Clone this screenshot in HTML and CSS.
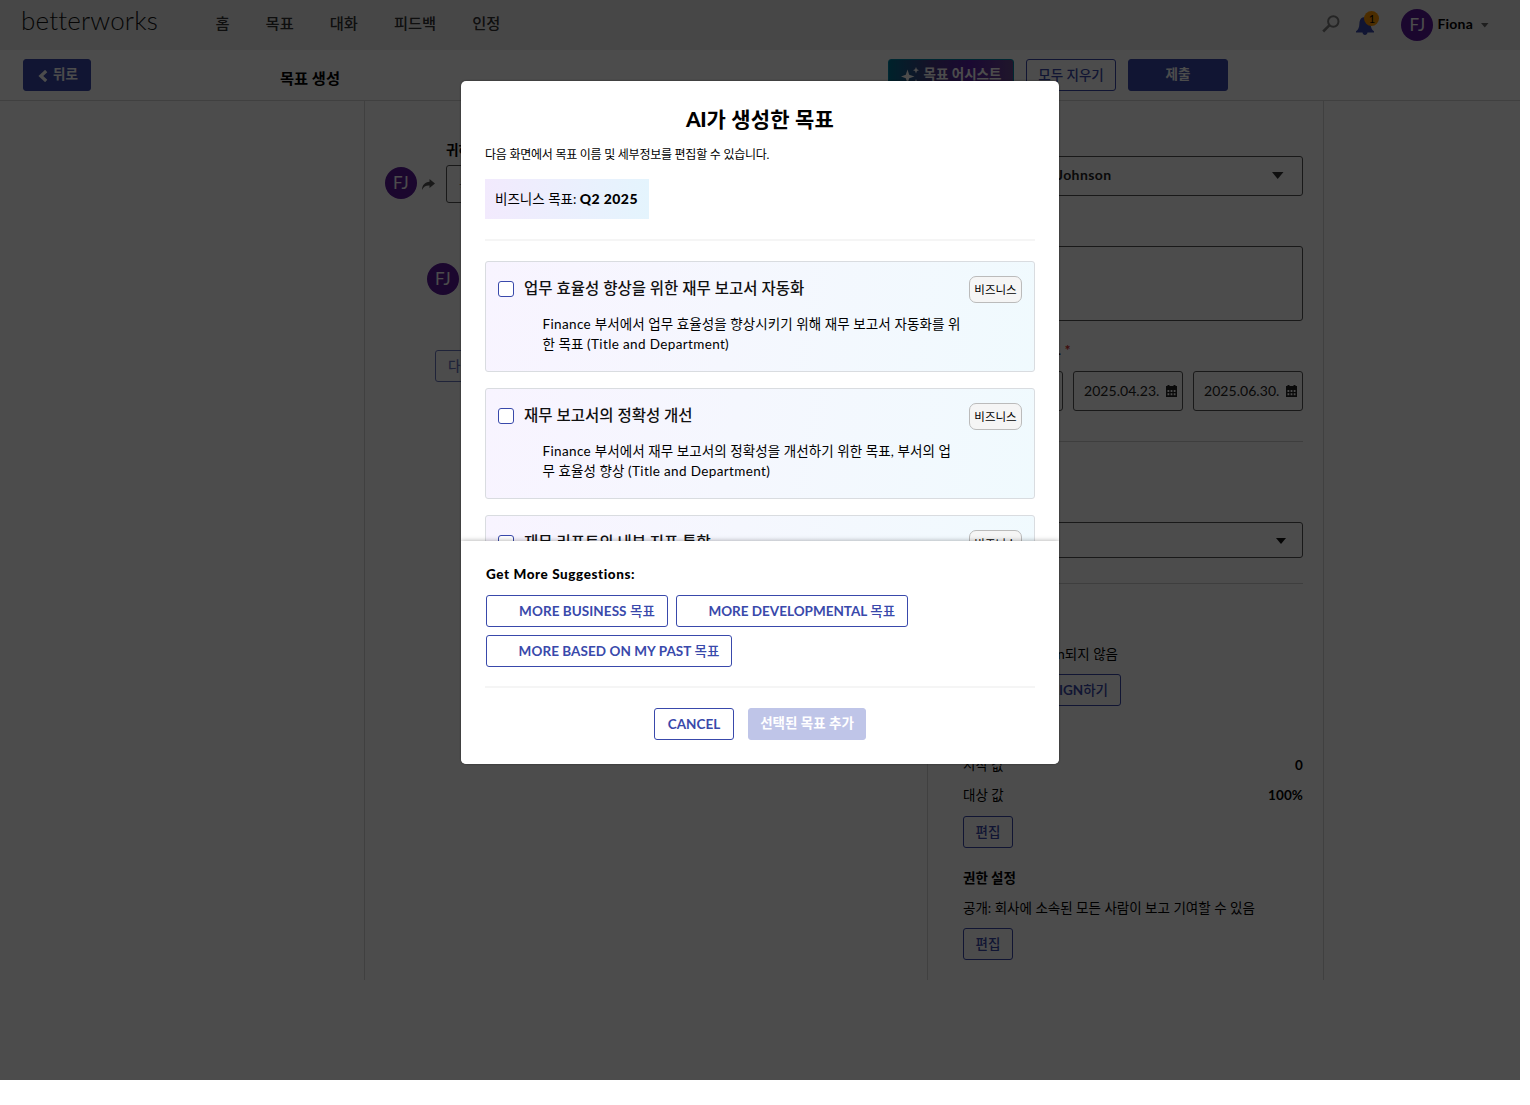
FILE: index.html
```html
<!DOCTYPE html>
<html lang="ko">
<head>
<meta charset="utf-8">
<title>목표 생성</title>
<link rel="stylesheet" href="styles.css">
</head>
<body>
<div class="app">
  <header class="topbar">
    <div class="logo">betterworks</div>
    <nav class="nav"><a>홈</a><a>목표</a><a>대화</a><a>피드백</a><a>인정</a></nav>
    <div class="tools">
      <svg class="search" width="18" height="18" viewBox="0 0 18 18"><circle cx="11.3" cy="6.5" r="5.2" fill="none" stroke="#7d7d7d" stroke-width="2"/><path d="M7.3 10.4 1.2 16.5" stroke="#7d7d7d" stroke-width="2.6"/></svg>
      <div class="bell">
        <svg width="20" height="20" viewBox="0 0 20 20"><path fill="#3949ab" d="M10 1C6.3 1 4.6 3.8 4.4 7.5 4.2 11.4 3.4 13.700 1 15.200V16.600H7.500C7.700 18.300 8.600 19 10 19S12.300 18.300 12.500 16.600H19V15.200C16.600 13.700 15.800 11.400 15.600 7.500 15.400 3.800 13.700 1 10 1Z"/></svg>
        <span class="badge">1</span>
      </div>
      <span class="avatar">FJ</span>
      <span class="user">Fiona</span>
      <svg width="8" height="5" viewBox="0 0 8 5"><path d="M0 0H7.500L3.800 4.500Z" fill="#666"/></svg>
    </div>
  </header>

  <div class="subbar">
    <button class="btn solid back"><svg width="10" height="12" viewBox="0 0 10 12"><path d="M8.200 1 2.800 6 8.200 11" fill="none" stroke="#fff" stroke-width="3.200"/></svg>뒤로</button>
    <h1>목표 생성</h1>
    <div class="actions">
      <button class="btn assist"><svg width="18" height="18" viewBox="0 0 18 18"><path fill="#fff" d="M6.500 2.500 8.200 7.800 13.500 9.500 8.200 11.200 6.500 16.500 4.800 11.200 0 9.500 4.800 7.800ZM15 0 15.900 2.300 18 3.200 15.900 4.100 15 6.400 14.100 4.100 12 3.200 14.100 2.300ZM15 12 15.900 14.200 18 15 15.900 15.900 15 18 14.100 15.900 12 15 14.100 14.200Z"/></svg>목표 어시스트</button>
      <button class="btn line clear">모두 지우기</button>
      <button class="btn solid submit">제출</button>
    </div>
  </div>

  <main class="content">
    <section class="left">
      <div class="label">귀하</div>
      <div class="goal-row">
        <span class="avatar">FJ</span>
        <svg width="13" height="11" viewBox="0 0 13 11"><path fill="#555" d="M7.500 0 13 4.500 7.500 9V6.500C4 6.300 1.500 7.500 0 11 0 6 3 3 7.500 2.700Z"/></svg>
        <div class="field goal">목표</div>
      </div>
      <div class="sub-row"><span class="avatar">FJ</span></div>
      <button class="btn line next">다음</button>
    </section>
    <aside class="right">
      <div class="field owner"><b>Johnson</b><svg width="12" height="8" viewBox="0 0 12 8"><path d="M0 0H11.500L5.700 7Z" fill="#333"/></svg></div>
      <div class="field memo"></div>
      <div class="period">. <i>*</i></div>
      <div class="dates">
        <div class="field date"></div>
        <div class="field date">2025.04.23.<svg width="11" height="12" viewBox="0 0 11 12"><path fill="#222" fill-rule="evenodd" d="M0 1H1.500V0H3.500V1H7.500V0H9.500V1H11V12H0ZM1.500 5H3.300V7H1.500ZM4.600 5H6.400V7H4.600ZM7.700 5H9.500V7H7.700ZM1.500 8.300H3.300V10.300H1.500ZM4.600 8.300H6.400V10.300H4.600ZM7.700 8.300H9.500V10.300H7.700Z"/></svg></div>
        <div class="field date">2025.06.30.<svg width="11" height="12" viewBox="0 0 11 12"><path fill="#222" fill-rule="evenodd" d="M0 1H1.500V0H3.500V1H7.500V0H9.500V1H11V12H0ZM1.500 5H3.300V7H1.500ZM4.600 5H6.400V7H4.600ZM7.700 5H9.500V7H7.700ZM1.500 8.300H3.300V10.300H1.500ZM4.600 8.300H6.400V10.300H4.600ZM7.700 8.300H9.500V10.300H7.700Z"/></svg></div>
      </div>
      <hr class="rule rule-a">
      <div class="field category"><svg width="10" height="6" viewBox="0 0 10 6"><path d="M0 0H10L5 6Z" fill="#111"/></svg></div>
      <hr class="rule rule-b">
      <p class="align-text">Align되지 않음</p>
      <button class="btn line align-btn">ALIGN<span>하기</span></button>
      <div class="value start"><span>시작 값</span><b>0</b></div>
      <div class="value"><span>대상 값</span><b>100%</b></div>
      <button class="btn line edit">편집</button>
      <h2>권한 설정</h2>
      <p class="visibility">공개: 회사에 소속된 모든 사람이 보고 기여할 수 있음</p>
      <button class="btn line edit">편집</button>
    </aside>
  </main>

  <div class="overlay">
    <div class="modal" role="dialog">
      <div class="modal-body">
        <h2 class="modal-title"><b>AI</b>가 생성한 목표</h2>
        <p class="modal-sub">다음 화면에서 목표 이름 및 세부정보를 편집할 수 있습니다.</p>
        <div class="tag">비즈니스 목표: <b>Q2 2025</b></div>
        <hr class="divider">
        <div class="cards">
          <article class="card">
            <span class="check"></span>
            <div class="card-main"><h3>업무 효율성 향상을 위한 재무 보고서 자동화</h3>
            <p><span class="en">Finance</span> 부서에서 업무 효율성을 향상시키기 위해 재무 보고서 자동화를 위<br>한 목표 <span class="en">(Title and Department)</span></p></div>
            <span class="chip">비즈니스</span>
          </article>
          <article class="card">
            <span class="check"></span>
            <div class="card-main"><h3>재무 보고서의 정확성 개선</h3>
            <p><span class="en">Finance</span> 부서에서 재무 보고서의 정확성을 개선하기 위한 목표, 부서의 업<br>무 효율성 향상 <span class="en">(Title and Department)</span></p></div>
            <span class="chip">비즈니스</span>
          </article>
          <article class="card">
            <span class="check"></span>
            <div class="card-main"><h3>재무 리포트의 내부 지표 통합</h3></div>
            <span class="chip">비즈니스</span>
          </article>
        </div>
      </div>
      <footer class="modal-foot">
        <h4>Get More Suggestions:</h4>
        <div class="more">
          <button class="btn line m1">MORE BUSINESS&nbsp;<span>목표</span></button>
          <button class="btn line m2">MORE DEVELOPMENTAL&nbsp;<span>목표</span></button>
          <button class="btn line m3">MORE BASED ON MY PAST&nbsp;<span>목표</span></button>
        </div>
        <hr class="divider">
        <div class="confirm">
          <button class="btn line cancel">CANCEL</button>
          <button class="btn add">선택된 목표 추가</button>
        </div>
      </footer>
    </div>
  </div>
</div>
</body>
</html>
```
FILE: styles.css
```css
* { box-sizing: border-box; }
body { margin: 0; background: #fff; color: #000; font: 14px/20px Lato, "Noto Sans CJK KR", sans-serif; }
h1, h2, h3, h4, p, hr { margin: 0; }
hr { border: 0; }
svg { display: block; flex: none; }
.app { position: relative; width: 1520px; height: 1080px; overflow: hidden; background: #fff; }

/* Shared controls */
.btn { display: flex; align-items: center; justify-content: center; height: 32px; padding: 0 0 2px; border: 1px solid #3949ab; border-radius: 3px; font: 600 13.5px/20px Lato, "Noto Sans CJK KR", sans-serif; white-space: nowrap; background: transparent; color: #3949ab; }
.line { padding-bottom: 0; font-weight: 700; }
.line span, .clear, .edit, .next { font-weight: 500; }
.solid { background: #3949ab; color: #fff; }
.avatar { display: flex; align-items: center; justify-content: center; flex: none; width: 32px; height: 32px; border-radius: 50%; background: #5a189a; color: #fff; font-size: 17px; letter-spacing: .4px; }
.field { border: 1px solid #555; border-radius: 3px; background: #fff; }

/* Top bar */
.topbar { display: flex; align-items: center; height: 50px; background: #efefef; }
.logo { width: 194px; padding: 0 0 10px 21px; font-weight: 300; font-size: 26px; letter-spacing: .15px; color: #111; }
.nav { display: flex; gap: 36px; padding: 0 0 4px 21.500px; font-size: 15.300px; font-weight: 500; color: #333; }
.tools { display: flex; align-items: center; margin-left: auto; padding-right: 31px; }
.search { margin: -3px 15px 0 0; }
.bell { position: relative; width: 20px; height: 20px; margin: 2px 26px 0 0; }
.badge { position: absolute; left: 9px; top: -5px; width: 15px; height: 15px; border-radius: 50%; background: #ff9800; color: #000; font-size: 11px; line-height: 15px; text-align: center; }
.user { margin: -2px 8px 0 4px; font-weight: 700; letter-spacing: .2px; }

/* Page bar */
.subbar { display: flex; align-items: flex-start; height: 51px; padding: 9px 292px 0 23px; border-bottom: 1px solid #d8d8d8; }
.subbar h1 { margin: 9px 0 0 189px; font-size: 15.300px; line-height: 20px; font-weight: 700; }
.back { width: 68px; gap: 5px; padding-left: 2px; }
.back svg { margin-top: 4px; }
.actions { display: flex; gap: 12px; margin-left: auto; }
.assist { width: 126px; gap: 5px; border-color: #0288a8; background: linear-gradient(90deg, #00708f, #4a3a85 35%, #5a1fa8 65%, #6b4a90); color: #fff; }
.assist svg { margin-top: 3px; }
.clear { width: 90px; }
.submit { width: 100px; }

/* Goal form */
.content { display: flex; width: 960px; height: 879px; margin-left: 364px; border: solid #d8d8d8; border-width: 0 1px; }
.left { width: 563px; padding: 39px 0 0 20px; border-right: 1px solid #d8d8d8; }
.label { padding-left: 61px; font-size: 13.500px; font-weight: 700; }
.goal-row { display: flex; align-items: center; gap: 5px; margin-top: 5px; }
.goal-row .avatar { margin-top: -2px; }
.goal { flex: 1; height: 38px; margin: 0 20px 0 6px; padding: 8px 12px; color: #777; }
.sub-row { margin: 60px 0 0 42px; }
.next { width: 68px; margin: 55px 0 0 50px; padding-left: 12px; justify-content: flex-start; opacity: .75; }
.right { flex: 1; padding: 55px 20px 0 35px; font-size: 13.500px; }
.owner { display: flex; align-items: center; justify-content: space-between; height: 40px; padding: 0 18px 0 93px; font-size: 14px; letter-spacing: .4px; color: #222; }
.owner b { margin-top: -2px; }
.memo { height: 75px; margin-top: 50px; }
.period { height: 20px; margin: 19px 0 0; padding-left: 95px; }
.period i { font-style: normal; font-weight: 900; color: #d32f2f; }
.dates { display: grid; grid-template-columns: 100px 110px 110px; gap: 10px; margin-top: 11px; }
.date { display: flex; align-items: center; justify-content: space-between; height: 40px; padding: 0 5px 0 10px; font-size: 14px; letter-spacing: .05px; color: #222; }
.rule { height: 1px; background: #d0d0d0; }
.rule-a { margin-top: 30px; }
.category { display: flex; align-items: center; justify-content: flex-end; height: 36px; margin-top: 80px; padding: 2px 16px 0 0; }
.rule-b { margin-top: 25px; }
.align-text { margin-top: 60px; width: 155px; text-align: right; white-space: nowrap; }
.align-btn { width: 158px; margin-top: 10px; padding-right: 12px; justify-content: flex-end; }
.value { display: flex; justify-content: space-between; height: 20px; margin-top: 10px; }
.start { margin-top: 49px; }
.value b { font-weight: 700; letter-spacing: .1px; }
.edit { width: 50px; margin-top: 11px; }
.right h2 { margin-top: 20px; font-size: 13.500px; line-height: 20px; }
.visibility { margin-top: 10px; }
.visibility + .edit { margin-top: 10px; }

/* Suggestions dialog */
.overlay { position: absolute; inset: 0; display: flex; align-items: flex-start; justify-content: center; padding-top: 81px; background: rgba(0, 0, 0, .7); }
.modal { width: 598px; height: 682.500px; border-radius: 5px; overflow: hidden; background: #fff; box-shadow: 0 0 2px rgba(0, 0, 0, .5); }
.modal-body { height: 459.500px; padding: 24px 24px 0; overflow: hidden; }
.modal-title { font-size: 21px; line-height: 28px; font-weight: 700; text-align: center; letter-spacing: .2px; }
.modal-title b { font-weight: 900; letter-spacing: -.3px; }
.modal-sub { margin-top: 12px; font-size: 12px; line-height: 20px; letter-spacing: -.25px; }
.tag { width: 163.500px; height: 40px; margin-top: 14px; padding: 10px 0 0 10px; background: linear-gradient(90deg, #f2eafd, #e4f4fd); font-size: 13.500px; line-height: 20px; white-space: nowrap; }
.tag b { font-weight: 900; font-size: 14px; letter-spacing: .4px; }
.divider { height: 2px; background: #f5f5f5; }
.modal-body .divider { margin-top: 20px; }
.cards { display: flex; flex-direction: column; gap: 16px; margin-top: 20px; }
.card { display: flex; align-items: flex-start; height: 111px; padding: 14px 12px 0; border: 1px solid #d9dce0; border-radius: 3px; background: linear-gradient(100deg, #f8f4ff, #f5f7fe 45%, #f0fafe); }
.check { width: 16px; height: 16px; margin-top: 5px; border: 1px solid #3949ab; border-radius: 3px; background: #fff; }
.card-main { flex: 1; margin-left: 10px; }
.card h3 { font-size: 15.500px; line-height: 24px; font-weight: 500; color: #111; }
.card p { margin: 14px 0 0 18.500px; font-size: 13.500px; line-height: 20px; letter-spacing: .08px; white-space: nowrap; }
.en { letter-spacing: .36px; }
.chip { width: 53px; height: 27px; border: 1px solid #bbb; border-radius: 7px; background: #f5f5f5; font-size: 11.500px; line-height: 26px; text-align: center; }
.modal-foot { position: relative; height: 223px; padding: 23px 24px 0 25px; background: #fff; box-shadow: 0 0 5px rgba(0, 0, 0, .35); }
.modal-foot h4 { font-size: 13.500px; line-height: 20px; font-weight: 900; letter-spacing: .58px; }
.more { display: flex; flex-wrap: wrap; gap: 8px; margin-top: 11.500px; }
.more .btn { padding-left: 20px; letter-spacing: .06px; }
.more .m2 { letter-spacing: 0; }
.m1 { width: 182px; }
.m2 { width: 231.500px; }
.m3 { width: 246px; }
.modal-foot .divider { margin: 19px 0 0 -1px; }
.confirm { display: flex; justify-content: center; gap: 14px; margin-top: 20px; padding-right: 1px; }
.cancel { width: 80px; }
.add { width: 118px; border-color: #bfc5e8; background: #bfc5e8; color: #fff; }
```
